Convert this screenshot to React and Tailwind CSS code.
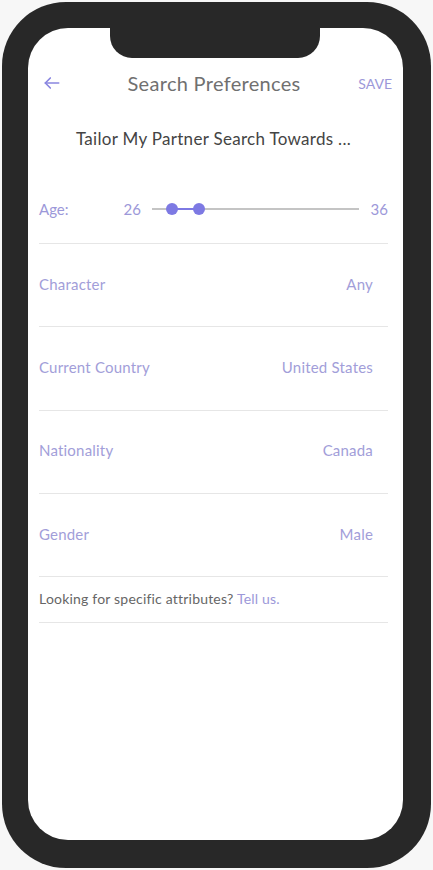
import React, { useState } from "react";

const rows = [
  { label: "Character", value: "Any" },
  { label: "Current Country", value: "United States" },
  { label: "Nationality", value: "Canada" },
  { label: "Gender", value: "Male" },
];

const App = () => {
  const [minAge] = useState(26);
  const [maxAge] = useState(36);

  return (
    <div
      className="w-[433px] h-[870px] bg-[#f7f7f7] p-[2px]"
      style={{ fontFamily: "Lato, 'Noto Sans', sans-serif" }}
    >
      {/* Phone frame */}
      <div className="w-[429px] h-[866px] rounded-[64px] bg-[#282828] pt-[26px] pl-[26px] pr-[28px] pb-[28px]">
        <div className="relative w-full h-full bg-white rounded-[40px] overflow-hidden">
          {/* Notch */}
          <div className="absolute top-0 left-[82px] w-[210px] h-[30px] bg-[#282828] rounded-b-[22px]" />

          {/* Header */}
          <div className="mt-[33px] h-[44px] grid grid-cols-[64px_1fr_64px] items-center pl-[14px] pr-[11px]">
            <svg width="20" height="20" viewBox="0 0 24 24" fill="none" stroke="#8a86e0" strokeWidth="2" strokeLinecap="round" strokeLinejoin="round">
              <path d="M20 12H4" />
              <path d="M10 6l-6 6 6 6" />
            </svg>
            <h1 className="text-[20px] tracking-[0.3px] text-[#707070] text-center whitespace-nowrap pr-[6px]">Search Preferences</h1>
            <button className="text-[14px] text-[#9c98d9] text-right">SAVE</button>
          </div>

          <div className="pl-[11px] pr-[15px]">
            {/* Subtitle */}
            <p className="mt-[23px] leading-[22px] text-[17px] tracking-[0.3px] text-[#444] text-center whitespace-nowrap">
              Tailor My Partner Search Towards ...
            </p>

            {/* Age slider */}
            <div className="mt-[25px] h-[69px] flex items-center border-b border-[#e6e6e6] text-[15px] text-[#9c98d9]">
              <span className="w-[80px]">Age:</span>
              <span className="w-[22px] text-right">{minAge}</span>
              <div className="relative ml-[11px] w-[207px] h-[14px]">
                <div className="absolute left-0 right-0 top-[6px] h-[2px] bg-[#c4c4c4]" />
                <div className="absolute left-[20px] w-[27px] top-[6px] h-[2px] bg-[#7d79e3]" />
                <div className="absolute left-[14px] top-[1px] w-[12px] h-[12px] rounded-full bg-[#7d79e3]" />
                <div className="absolute left-[41px] top-[1px] w-[12px] h-[12px] rounded-full bg-[#7d79e3]" />
              </div>
              <span className="ml-auto">{maxAge}</span>
            </div>

            {/* Preference rows */}
            {rows.map((row) => (
              <div
                key={row.label}
                className="h-[83.3px] flex items-center justify-between border-b border-[#e6e6e6] pr-[15px] pb-[2px] text-[15px] tracking-[0.2px] text-[#a29ed9]"
              >
                <span>{row.label}</span>
                <span>{row.value}</span>
              </div>
            ))}

            {/* Footer note */}
            <div className="h-[46px] flex items-center border-b border-[#e6e6e6] pb-[2px] text-[14px] tracking-[0.2px] text-[#666]">
              <span className="whitespace-nowrap">
                Looking for specific attributes? <span className="text-[#9c98d9]">Tell us.</span>
              </span>
            </div>
          </div>
        </div>
      </div>
    </div>
  );
};

export default App;
